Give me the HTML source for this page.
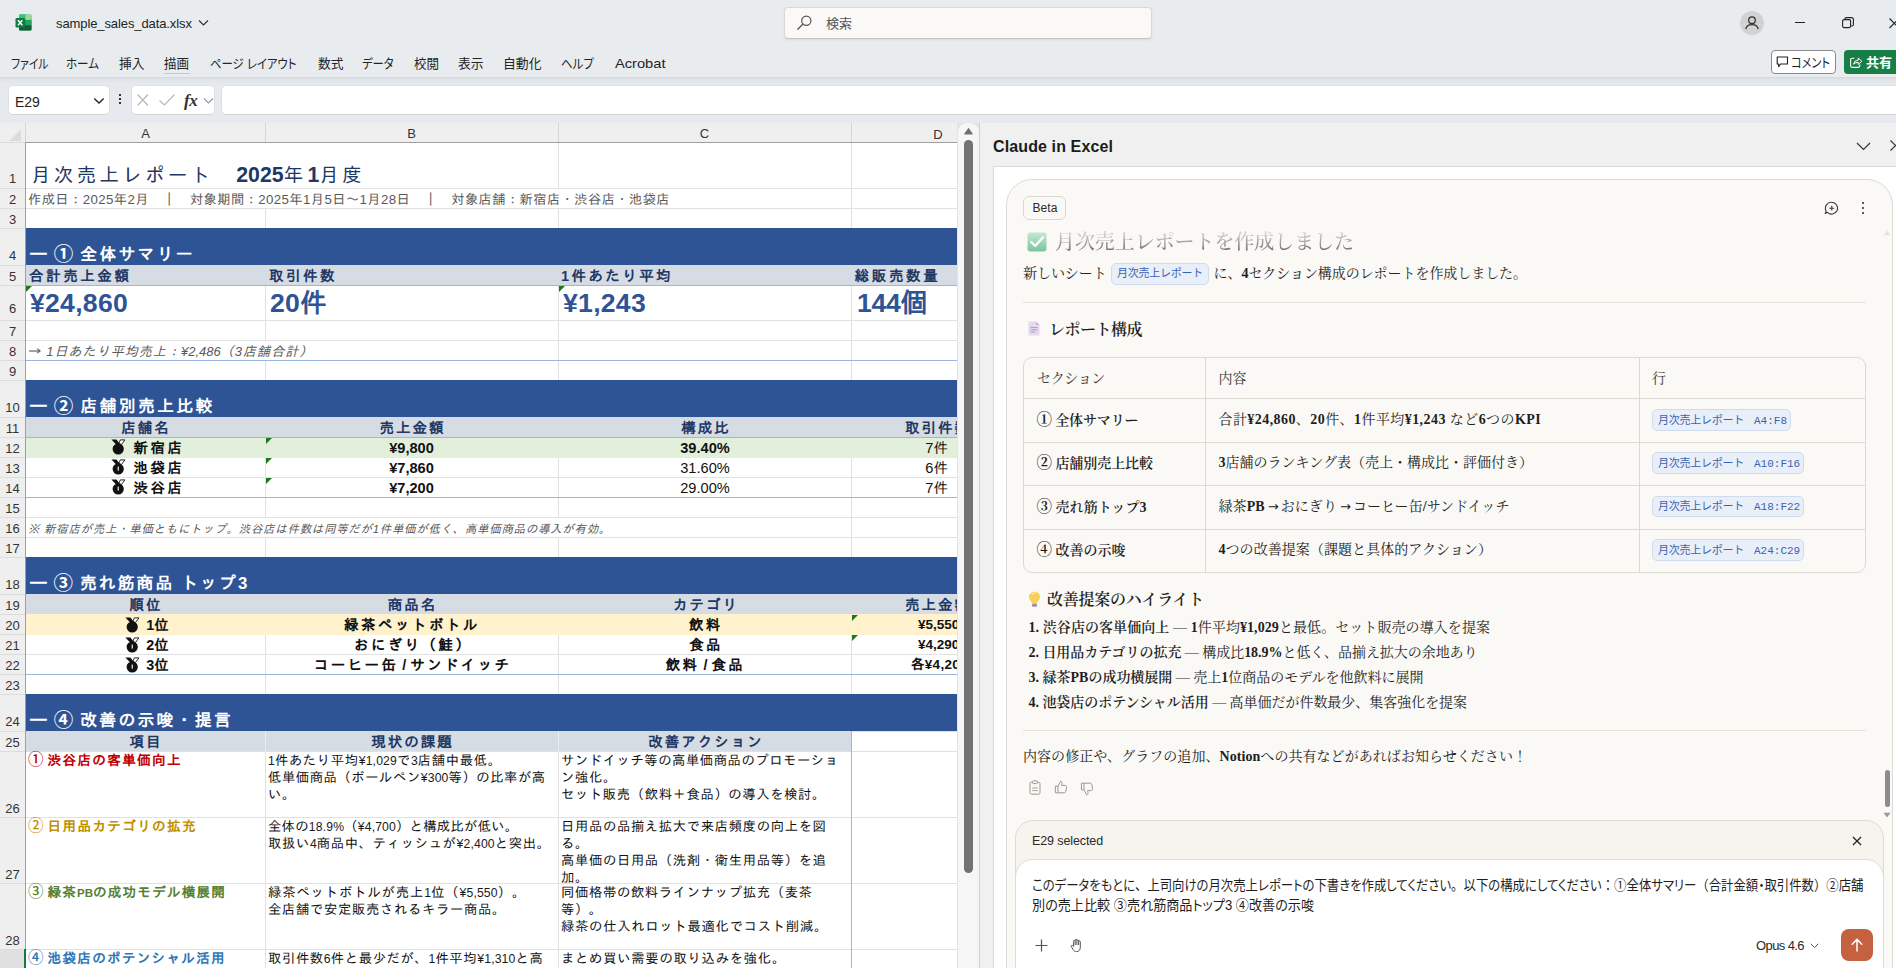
<!DOCTYPE html>
<html lang="ja"><head><meta charset="utf-8"><title>sample_sales_data.xlsx - Excel</title>
<style>
*{box-sizing:border-box}
html,body{margin:0;padding:0}
body{width:1896px;height:968px;overflow:hidden;position:relative;background:#e8ecef;
 font-family:"Liberation Sans","Noto Sans CJK JP",sans-serif;color:#242424;-webkit-font-smoothing:antialiased}
.abs{position:absolute}
.t{position:absolute;white-space:nowrap;line-height:1;transform:translateY(-50%)}
.ui{font-family:"Liberation Sans","Noto Sans CJK JP",sans-serif}
#top{position:absolute;left:0;top:0;width:1896px;height:78px;background:#e8ecef}
#topline{position:absolute;left:0;top:77px;width:1896px;height:7px;background:linear-gradient(#d3d7db 0,#dfe3e7 25%,#e6eaef 100%);z-index:2}
#fbar{position:absolute;left:0;top:79px;width:1896px;height:44px;background:#e6eaef}
.box{position:absolute;background:#fff;border:1px solid #dde1e5;border-bottom-color:#cfd2d6;border-radius:5px}
.menu{font-feature-settings:"palt";position:absolute;top:63px;font-size:13px;color:#242424;white-space:nowrap;line-height:1;transform:translateY(-50%);transform-origin:left center}
.menu i{font-style:normal;display:inline-block;transform-origin:left center}

#sheet{position:absolute;left:0;top:123px;width:980px;height:845px;background:#fff;overflow:hidden}
#colhdr{position:absolute;left:0;top:0;width:958px;height:20px;background:#efefef;border-bottom:1px solid #9f9f9f}
#rowhdr{position:absolute;left:0;top:20px;width:26px;height:830px;background:#efefef;border-right:1px solid #9f9f9f}
.ch{position:absolute;top:0;height:19px;border-right:1px solid #d4d4d4;font-size:13px;color:#333;text-align:center;line-height:22px}
.rn{position:absolute;left:0;width:25px;text-align:center;font-size:13px;color:#333;line-height:1;border-top:1px solid #dcdcdc}
.rn span{position:absolute;left:0;width:25px;bottom:2px;text-align:center}
.cell{position:absolute;border-top:1px solid #e1e1e1;border-left:1px solid #e1e1e1;overflow:visible}
.sh{font-family:"Liberation Sans","IPAGothic","Noto Sans CJK JP",sans-serif}
.sc{font-family:"Liberation Sans","IPAGothic","Noto Sans CJK JP",sans-serif}
.band{position:absolute;left:26px;width:932px;background:#2f5496}
.hdrrow{position:absolute;background:#d6dce4}
.tri{position:absolute;width:0;height:0;border-top:6px solid #1a7a1a;border-right:6px solid transparent}
.bl{position:absolute;height:1px;background:#9bb7e0}
.nn{font-size:12.2px;letter-spacing:0.15px;color:#1a1a1a}
.wrap{position:absolute;white-space:pre;line-height:17px;font-size:13.3px;color:#111;letter-spacing:0.55px}

#panel{position:absolute;left:980px;top:123px;width:917px;height:845px;background:#f0f0f0;overflow:hidden}
#pwhite{position:absolute;left:13px;top:43px;width:910px;height:810px;background:#fff;border:1px solid #d9d9d9}
#card{position:absolute;left:26px;top:56px;width:887px;height:820px;background:#faf9f5;border:1px solid #dcdbd5;border-radius:26px}
.sf{font-family:"Liberation Serif","Noto Serif CJK SC",serif}
.sf b{font-family:"Liberation Serif","Noto Serif CJK SC",serif;font-weight:600}
.sf .l{font-weight:bold}
.cn{font-family:"Liberation Serif","Noto Serif CJK SC",serif;font-weight:700;font-size:15.5px;vertical-align:-0.5px}
.ar{font-family:"DejaVu Sans","Liberation Sans",sans-serif;font-size:13px;margin:0 2px 0 3px;vertical-align:0.5px}
.p{position:absolute;white-space:nowrap;line-height:1;transform:translateY(-50%);font-size:14px;color:#1f1e1d}
.tag{display:inline-block;background:#e9eff8;border:1px solid #cfdcf0;border-radius:5px;color:#3a62b3;font-family:"Liberation Sans","Noto Sans CJK JP",sans-serif;font-size:12px;line-height:1}
.squeeze{font-feature-settings:"palt"}
.fw{font-feature-settings:"palt" 0}
.mono{font-family:"Liberation Mono","DejaVu Sans Mono",monospace}
.hr{position:absolute;left:43px;width:843px;height:1px;background:#e3e1da}
#tbl{position:absolute;left:43px;top:234px;width:843px;height:216px;border:1px solid #dad9d2;border-radius:9px}
.tl{position:absolute;background:#dad9d2}
</style></head>
<body>
<div id="top">
<svg class="abs" style="left:15px;top:14px" width="17" height="17" viewBox="0 0 17 17">
<rect x="4" y="0.5" width="12.5" height="16" rx="1.6" fill="#21a366"/>
<rect x="4" y="0.5" width="6.3" height="5.4" fill="#33c481"/><rect x="10.3" y="0.5" width="6.2" height="5.4" rx="1" fill="#9bdc9b"/>
<rect x="10.3" y="5.9" width="6.2" height="5.3" fill="#21a366"/><rect x="4" y="5.9" width="6.3" height="5.3" fill="#107c41"/>
<rect x="4" y="11.2" width="12.5" height="5.3" rx="1" fill="#185c37"/>
<rect x="0.5" y="4" width="9.5" height="9.5" rx="1.2" fill="#107c41"/>
<path d="M3 6.3 L7.4 11.3 M7.4 6.3 L3 11.3" stroke="#fff" stroke-width="1.5" fill="none"/></svg>
<span class="t ui" style="left:56px;top:23px;font-size:13px;color:#242424;letter-spacing:-0.1px">sample_sales_data.xlsx</span>
<svg class="abs" style="left:198px;top:19px" width="11" height="8" viewBox="0 0 11 8"><path d="M1 1.5 L5.5 6 L10 1.5" stroke="#333" stroke-width="1.2" fill="none"/></svg>
<div class="abs" style="left:784px;top:7px;width:368px;height:32px;background:#faf9f8;border:1px solid #d9d9d9;border-bottom-color:#c4c4c4;border-radius:4px;box-shadow:0 1px 2px rgba(0,0,0,.08)"></div>
<svg class="abs" style="left:796px;top:14px" width="17" height="17" viewBox="0 0 17 17"><circle cx="10.3" cy="6.7" r="4.6" stroke="#555" stroke-width="1.2" fill="none"/><path d="M7 10 L1.8 15.2" stroke="#555" stroke-width="1.3" stroke-linecap="round"/></svg>
<span class="t ui" style="left:826px;top:23px;font-size:13px;color:#555">検索</span>
<svg class="abs" style="left:1740px;top:11px" width="24" height="24" viewBox="0 0 24 24"><circle cx="12" cy="12" r="12" fill="#d2d2d2"/>
<circle cx="12" cy="9.2" r="3.3" stroke="#333" stroke-width="1.3" fill="none"/><path d="M5.8 18.2 C6.3 14.6 8.6 13.6 12 13.6 C15.4 13.6 17.7 14.6 18.2 18.2" stroke="#333" stroke-width="1.3" fill="none"/></svg>
<div class="abs" style="left:1795px;top:22px;width:10px;height:1px;background:#222"></div>
<svg class="abs" style="left:1842px;top:17px" width="12" height="12" viewBox="0 0 12 12"><rect x="0.6" y="2.6" width="8" height="8" rx="1.5" stroke="#222" stroke-width="1.1" fill="none"/><path d="M3 2.4 V1.8 Q3 0.6 4.4 0.6 H9.4 Q11.4 0.6 11.4 2.6 V7.6 Q11.4 9 10.2 9 H9" stroke="#222" stroke-width="1.1" fill="none"/></svg>
<svg class="abs" style="left:1889px;top:18px" width="10" height="11" viewBox="0 0 10 11"><path d="M0.5 0.5 L10 10 M0.5 10 L10 0.5" stroke="#222" stroke-width="1.1"/></svg>
<span class="menu" style="transform:translateY(-50%) scaleX(0.8328);transform-origin:left center;left:11px">ファイル</span>
<span class="menu" style="transform:translateY(-50%) scaleX(0.8870);transform-origin:left center;left:66px">ホーム</span>
<span class="menu" style="transform:translateY(-50%) scaleX(0.9802);transform-origin:left center;left:119px">挿入</span>
<span class="menu" style="transform:translateY(-50%) scaleX(0.9610);transform-origin:left center;left:164px">描画</span>
<span class="menu" style="transform:translateY(-50%) scaleX(0.8751);transform-origin:left center;left:210px">ページ レイアウト</span>
<span class="menu" style="transform:translateY(-50%) scaleX(0.9802);transform-origin:left center;left:317.5px">数式</span>
<span class="menu" style="transform:translateY(-50%) scaleX(0.8667);transform-origin:left center;left:362px">データ</span>
<span class="menu" style="transform:translateY(-50%) scaleX(0.9610);transform-origin:left center;left:413.5px">校閲</span>
<span class="menu" style="transform:translateY(-50%) scaleX(0.9802);transform-origin:left center;left:458px">表示</span>
<span class="menu" style="transform:translateY(-50%) scaleX(0.9868);transform-origin:left center;left:503px">自動化</span>
<span class="menu" style="transform:translateY(-50%) scaleX(0.8844);transform-origin:left center;left:560.5px">ヘルプ</span>
<span class="menu" style="transform:translateY(-50%) scaleX(1.1269);transform-origin:left center;left:614.5px">Acrobat</span>
<div class="abs" style="left:164px;top:73px;width:26px;height:1px;background:#c8c8c8"></div>
<div class="abs" style="left:1771px;top:50px;width:65px;height:24px;background:#fff;border:1px solid #8a8a8a;border-radius:4px"></div>
<svg class="abs" style="left:1776px;top:56px" width="13" height="12" viewBox="0 0 13 12"><path d="M1.2 1 H11.5 V8 H4.6 L2.6 10.6 V8 H1.2 Z" stroke="#222" stroke-width="1.1" fill="none" stroke-linejoin="round"/></svg>
<span class="menu" style="transform:translateY(-50%) scaleX(0.8613);transform-origin:left center;left:1791px;top:62px;">コメント</span>
<div class="abs" style="left:1844px;top:50px;width:60px;height:24px;background:#177e45;border-radius:4px"></div>
<svg class="abs" style="left:1849px;top:55px" width="14" height="14" viewBox="0 0 14 14"><path d="M5.5 3.2 H3.2 Q1.6 3.2 1.6 4.8 V10.8 Q1.6 12.4 3.2 12.4 H9.2 Q10.8 12.4 10.8 10.8 V9.6" stroke="#fff" stroke-width="1.1" fill="none"/><path d="M4.6 9.2 Q5 5.2 9.2 5.2 V3 L12.8 6.3 L9.2 9.4 V7.4 Q6.4 7.2 4.6 9.2 Z" stroke="#fff" stroke-width="1" fill="none" stroke-linejoin="round"/></svg>
<span class="menu" style="left:1866px;top:62px;color:#fff;font-size:13px;font-weight:bold">共有</span>
</div><div id="topline"></div>
<div id="fbar">
<div class="box" style="left:8px;top:6px;width:102px;height:30px"></div>
<span class="t ui" style="left:15px;top:23px;font-size:14px;color:#242424">E29</span>
<svg class="abs" style="left:93px;top:18px" width="12" height="8" viewBox="0 0 12 8"><path d="M1.3 1.5 L6 6 L10.7 1.5" stroke="#222" stroke-width="1.3" fill="none"/></svg>
<div class="abs" style="left:119px;top:15px;width:2px;height:2px;background:#333;box-shadow:0 4px 0 #333,0 8px 0 #333"></div>
<div class="box" style="left:131px;top:6px;width:84px;height:30px"></div>
<svg class="abs" style="left:136px;top:14px" width="14" height="14" viewBox="0 0 14 14"><path d="M1.5 1.5 L12 12.5 M12 1.5 L1.5 12.5" stroke="#b8b8b8" stroke-width="1.2"/></svg>
<svg class="abs" style="left:158px;top:14px" width="18" height="14" viewBox="0 0 18 14"><path d="M1.5 7.5 L6.5 12 L16.5 1.5" stroke="#b8b8b8" stroke-width="1.2" fill="none"/></svg>
<span class="t" style="left:184px;top:21px;font-family:'Liberation Serif',serif;font-style:italic;font-weight:bold;font-size:17px;color:#333;letter-spacing:-0.5px">fx</span>
<svg class="abs" style="left:203px;top:18px" width="11" height="8" viewBox="0 0 11 8"><path d="M1 1.5 L5.5 6 L10 1.5" stroke="#999" stroke-width="1.1" fill="none"/></svg>
<div class="box" style="left:221px;top:6px;width:1690px;height:30px"></div>
</div>
<div id="sheet">
<div class="abs" style="left:26px;top:19px;width:932px;height:1px;background:#e1e1e1"></div>
<div class="abs" style="left:26px;top:65px;width:932px;height:1px;background:#e1e1e1"></div>
<div class="abs" style="left:26px;top:85px;width:932px;height:1px;background:#e1e1e1"></div>
<div class="abs" style="left:26px;top:105px;width:932px;height:1px;background:#e1e1e1"></div>
<div class="abs" style="left:26px;top:142px;width:932px;height:1px;background:#e1e1e1"></div>
<div class="abs" style="left:26px;top:162px;width:932px;height:1px;background:#e1e1e1"></div>
<div class="abs" style="left:26px;top:197px;width:932px;height:1px;background:#e1e1e1"></div>
<div class="abs" style="left:26px;top:217px;width:932px;height:1px;background:#e1e1e1"></div>
<div class="abs" style="left:26px;top:237px;width:932px;height:1px;background:#e1e1e1"></div>
<div class="abs" style="left:26px;top:257px;width:932px;height:1px;background:#e1e1e1"></div>
<div class="abs" style="left:26px;top:294px;width:932px;height:1px;background:#e1e1e1"></div>
<div class="abs" style="left:26px;top:314px;width:932px;height:1px;background:#e1e1e1"></div>
<div class="abs" style="left:26px;top:334px;width:932px;height:1px;background:#e1e1e1"></div>
<div class="abs" style="left:26px;top:354px;width:932px;height:1px;background:#e1e1e1"></div>
<div class="abs" style="left:26px;top:374px;width:932px;height:1px;background:#e1e1e1"></div>
<div class="abs" style="left:26px;top:394px;width:932px;height:1px;background:#e1e1e1"></div>
<div class="abs" style="left:26px;top:414px;width:932px;height:1px;background:#e1e1e1"></div>
<div class="abs" style="left:26px;top:434px;width:932px;height:1px;background:#e1e1e1"></div>
<div class="abs" style="left:26px;top:471px;width:932px;height:1px;background:#e1e1e1"></div>
<div class="abs" style="left:26px;top:491px;width:932px;height:1px;background:#e1e1e1"></div>
<div class="abs" style="left:26px;top:511px;width:932px;height:1px;background:#e1e1e1"></div>
<div class="abs" style="left:26px;top:531px;width:932px;height:1px;background:#e1e1e1"></div>
<div class="abs" style="left:26px;top:551px;width:932px;height:1px;background:#e1e1e1"></div>
<div class="abs" style="left:26px;top:571px;width:932px;height:1px;background:#e1e1e1"></div>
<div class="abs" style="left:26px;top:608px;width:932px;height:1px;background:#e1e1e1"></div>
<div class="abs" style="left:26px;top:628px;width:932px;height:1px;background:#e1e1e1"></div>
<div class="abs" style="left:26px;top:694px;width:932px;height:1px;background:#e1e1e1"></div>
<div class="abs" style="left:26px;top:760px;width:932px;height:1px;background:#e1e1e1"></div>
<div class="abs" style="left:26px;top:826px;width:932px;height:1px;background:#e1e1e1"></div>
<div class="abs" style="left:265px;top:20px;width:1px;height:830px;background:#e1e1e1"></div>
<div class="abs" style="left:558px;top:20px;width:1px;height:830px;background:#e1e1e1"></div>
<div class="abs" style="left:851px;top:20px;width:1px;height:830px;background:#e1e1e1"></div>
<div class="abs" style="left:27px;top:20px;width:531px;height:45px;background:#fff"></div>
<div class="abs" style="left:27px;top:66px;width:824px;height:19px;background:#fff"></div>
<div class="abs" style="left:27px;top:218px;width:531px;height:19px;background:#fff"></div>
<div class="abs" style="left:27px;top:395px;width:824px;height:19px;background:#fff"></div>
<div class="band" style="top:105px;height:37px"></div>
<div class="band" style="top:257px;height:37px"></div>
<div class="band" style="top:434px;height:37px"></div>
<div class="band" style="top:571px;height:37px"></div>
<div class="hdrrow" style="left:26px;width:932px;top:142px;height:20px"></div>
<div class="hdrrow" style="left:26px;width:932px;top:294px;height:20px"></div>
<div class="hdrrow" style="left:26px;width:932px;top:471px;height:20px"></div>
<div class="hdrrow" style="left:26px;width:826px;top:608px;height:20px"></div>
<div class="abs" style="left:265px;top:608px;width:1px;height:20px;background:#e9edf3"></div><div class="abs" style="left:558px;top:608px;width:1px;height:20px;background:#e9edf3"></div>
<div class="abs" style="left:26px;width:932px;top:315px;height:20px;background:#e2efda"></div>
<div class="abs" style="left:26px;width:932px;top:491px;height:21px;background:#fff2cc"></div>
<div class="bl" style="left:26px;width:932px;top:162px"></div>
<div class="bl" style="left:26px;width:932px;top:237px"></div>
<div class="bl" style="left:26px;width:932px;top:314px"></div>
<div class="bl" style="left:26px;width:932px;top:374px"></div>
<div class="bl" style="left:26px;width:932px;top:551px"></div>
<div class="abs" style="left:851px;top:608px;width:1px;height:240px;background:#9bb7e0"></div>
<div class="tri" style="left:26px;top:163px"></div>
<div class="tri" style="left:559px;top:163px"></div>
<div class="tri" style="left:266px;top:315px"></div>
<div class="tri" style="left:266px;top:335px"></div>
<div class="tri" style="left:266px;top:355px"></div>
<div class="tri" style="left:852px;top:492px"></div>
<div class="tri" style="left:852px;top:512px"></div>
<span class="t sh" style="left:31px;top:52.5px;transform:translateY(-50%);font-size:19.6px;color:#1f3864;letter-spacing:3.213px">月次売上レポート　<b style="font-size:21.3px;letter-spacing:0;-webkit-text-stroke:0">2025</b>年<b style="font-size:21.3px;letter-spacing:0;-webkit-text-stroke:0;margin-left:1px">1</b>月度</span>
<span class="t sh" style="left:28px;top:77px;transform:translateY(-50%);font-size:13.3px;color:#595959;letter-spacing:0.375px">作成日：2025年2月　｜　対象期間：2025年1月5日～1月28日　｜　対象店舗：新宿店・渋谷店・池袋店</span>
<span class="t sh" style="left:30px;top:131.7px;transform:translateY(-50%);font-size:16.8px;font-weight:bold;color:#fff;letter-spacing:2.328px"><span style="font-weight:normal;letter-spacing:0">━</span> <span style="font-family:'Liberation Sans','Noto Sans CJK JP',sans-serif;font-weight:700;font-size:19.5px;vertical-align:-1.5px;letter-spacing:0">①</span> 全体サマリー</span>
<span class="t sh" style="left:30px;top:283.7px;transform:translateY(-50%);font-size:16.8px;font-weight:bold;color:#fff;letter-spacing:2.409px"><span style="font-weight:normal;letter-spacing:0">━</span> <span style="font-family:'Liberation Sans','Noto Sans CJK JP',sans-serif;font-weight:700;font-size:19.5px;vertical-align:-1.5px;letter-spacing:0">②</span> 店舗別売上比較</span>
<span class="t sh" style="left:30px;top:460.70000000000005px;transform:translateY(-50%);font-size:16.8px;font-weight:bold;color:#fff;letter-spacing:2.123px"><span style="font-weight:normal;letter-spacing:0">━</span> <span style="font-family:'Liberation Sans','Noto Sans CJK JP',sans-serif;font-weight:700;font-size:19.5px;vertical-align:-1.5px;letter-spacing:0">③</span> 売れ筋商品 トップ3</span>
<span class="t sh" style="left:30px;top:597.7px;transform:translateY(-50%);font-size:16.8px;font-weight:bold;color:#fff;letter-spacing:2.309px"><span style="font-weight:normal;letter-spacing:0">━</span> <span style="font-family:'Liberation Sans','Noto Sans CJK JP',sans-serif;font-weight:700;font-size:19.5px;vertical-align:-1.5px;letter-spacing:0">④</span> 改善の示唆・提言</span>
<span class="t sh" style="left:29px;top:153px;transform:translateY(-50%);font-size:14.5px;font-weight:bold;color:#1f3864;letter-spacing:2.583px">合計売上金額</span>
<span class="t sh" style="left:269px;top:153px;transform:translateY(-50%);font-size:14.5px;font-weight:bold;color:#1f3864;letter-spacing:2.500px">取引件数</span>
<span class="t sh" style="left:561px;top:153px;transform:translateY(-50%);font-size:14.5px;font-weight:bold;color:#1f3864;letter-spacing:2.417px">1件あたり平均</span>
<span class="t sh" style="left:854.5px;top:153px;transform:translateY(-50%);font-size:14.5px;font-weight:bold;color:#1f3864;letter-spacing:2.700px">総販売数量</span>
<span class="t sh" style="left:30px;top:180px;transform:translateY(-50%);font-size:26.6px;font-weight:bold;color:#2f5496;letter-spacing:0.266px">¥24,860</span>
<span class="t sh" style="left:270px;top:180px;transform:translateY(-50%);font-size:26.6px;font-weight:bold;color:#2f5496;letter-spacing:0.271px">20件</span>
<span class="t sh" style="left:563px;top:180px;transform:translateY(-50%);font-size:26.6px;font-weight:bold;color:#2f5496;letter-spacing:0.276px">¥1,243</span>
<span class="t sh" style="left:857px;top:180px;transform:translateY(-50%);font-size:26.6px;font-weight:bold;color:#2f5496;letter-spacing:-0.242px">144個</span>
<span class="t sh" style="left:28px;top:229px;transform:translateY(-50%);font-size:13px;font-style:italic;color:#595959;letter-spacing:1.054px"><span style="font-family:IPAGothic,'Liberation Sans',sans-serif;font-size:13.5px;letter-spacing:0;font-style:normal">→</span> 1日あたり平均売上：<span style="letter-spacing:0">¥2,486</span>（3店舗合計）</span>
<span class="t sh" style="left:146.0px;top:304.5px;transform:translate(-50%,-50%);font-size:14.5px;font-weight:bold;color:#1f3864;letter-spacing:2px">店舗名</span>
<span class="t sh" style="left:412.5px;top:304.5px;transform:translate(-50%,-50%);font-size:14.5px;font-weight:bold;color:#1f3864;letter-spacing:2px">売上金額</span>
<span class="t sh" style="left:706.0px;top:304.5px;transform:translate(-50%,-50%);font-size:14.5px;font-weight:bold;color:#1f3864;letter-spacing:2px">構成比</span>
<span class="t sh" style="left:905px;top:304.5px;transform:translateY(-50%);font-size:14.5px;font-weight:bold;color:#1f3864;letter-spacing:2px">取引件数</span>
<svg class="abs" style="left:110.5px;top:316.0px" width="15" height="16" viewBox="0 0 15 16"><path d="M0.4 0.6 L5.4 0.6 L8.6 4.6 L5.6 6 Z" fill="#111"/><path d="M9.4 0.9 L13.9 0.9 L10.4 5.6 L7.9 4.2 Z" fill="#fff" stroke="#111" stroke-width="0.9" stroke-linejoin="round"/><circle cx="7.2" cy="10" r="5.6" fill="#111"/></svg>
<span class="t sh" style="left:133.5px;top:324.5px;transform:translateY(-50%);font-size:14.4px;font-weight:bold;color:#111;letter-spacing:2.609px">新宿店</span>
<span class="t sh" style="left:411.5px;top:324.5px;transform:translate(-50%,-50%);font-size:14.6px;font-weight:bold;color:#111">¥9,800</span>
<span class="t sh" style="left:705px;top:324.5px;transform:translate(-50%,-50%);font-size:14.6px;color:#111;font-weight:bold">39.40%</span>
<span class="t sh" style="left:948px;top:324.5px;transform:translate(-100%,-50%);font-size:14.6px;color:#111;letter-spacing:0px">7件</span>
<svg class="abs" style="left:110.5px;top:336.0px" width="15" height="16" viewBox="0 0 15 16"><path d="M0.4 0.6 L5.4 0.6 L8.6 4.6 L5.6 6 Z" fill="#111"/><path d="M9.4 0.9 L13.9 0.9 L10.4 5.6 L7.9 4.2 Z" fill="#fff" stroke="#111" stroke-width="0.9" stroke-linejoin="round"/><circle cx="7.2" cy="10" r="5.6" fill="#111"/><rect x="6.6" y="7.6" width="1.4" height="4" fill="#fff" opacity=".8"/></svg>
<span class="t sh" style="left:133.5px;top:344.5px;transform:translateY(-50%);font-size:14.4px;font-weight:bold;color:#111;letter-spacing:2.609px">池袋店</span>
<span class="t sh" style="left:411.5px;top:344.5px;transform:translate(-50%,-50%);font-size:14.6px;font-weight:bold;color:#111">¥7,860</span>
<span class="t sh" style="left:705px;top:344.5px;transform:translate(-50%,-50%);font-size:14.6px;color:#111">31.60%</span>
<span class="t sh" style="left:948px;top:344.5px;transform:translate(-100%,-50%);font-size:14.6px;color:#111;letter-spacing:0px">6件</span>
<svg class="abs" style="left:110.5px;top:356.0px" width="15" height="16" viewBox="0 0 15 16"><path d="M0.4 0.6 L5.4 0.6 L8.6 4.6 L5.6 6 Z" fill="#111"/><path d="M9.4 0.9 L13.9 0.9 L10.4 5.6 L7.9 4.2 Z" fill="#fff" stroke="#111" stroke-width="0.9" stroke-linejoin="round"/><circle cx="7.2" cy="10" r="5.6" fill="#111"/><rect x="6.6" y="7.6" width="1.4" height="4" fill="#fff" opacity=".8"/></svg>
<span class="t sh" style="left:133.5px;top:364.5px;transform:translateY(-50%);font-size:14.4px;font-weight:bold;color:#111;letter-spacing:2.609px">渋谷店</span>
<span class="t sh" style="left:411.5px;top:364.5px;transform:translate(-50%,-50%);font-size:14.6px;font-weight:bold;color:#111">¥7,200</span>
<span class="t sh" style="left:705px;top:364.5px;transform:translate(-50%,-50%);font-size:14.6px;color:#111">29.00%</span>
<span class="t sh" style="left:948px;top:364.5px;transform:translate(-100%,-50%);font-size:14.6px;color:#111;letter-spacing:0px">7件</span>
<span class="t sh" style="left:28px;top:407px;transform:translateY(-50%);font-size:11.5px;font-style:italic;color:#595959;letter-spacing:0.671px">※ 新宿店が売上・単価ともにトップ。渋谷店は件数は同等だが1件単価が低く、高単価商品の導入が有効。</span>
<span class="t sh" style="left:146.0px;top:481.5px;transform:translate(-50%,-50%);font-size:14.5px;font-weight:bold;color:#1f3864;letter-spacing:2px">順位</span>
<span class="t sh" style="left:412.5px;top:481.5px;transform:translate(-50%,-50%);font-size:14.5px;font-weight:bold;color:#1f3864;letter-spacing:2px">商品名</span>
<span class="t sh" style="left:706.0px;top:481.5px;transform:translate(-50%,-50%);font-size:14.5px;font-weight:bold;color:#1f3864;letter-spacing:2px">カテゴリ</span>
<span class="t sh" style="left:905px;top:481.5px;transform:translateY(-50%);font-size:14.5px;font-weight:bold;color:#1f3864;letter-spacing:2px">売上金額</span>
<svg class="abs" style="left:125px;top:493.5px" width="15" height="16" viewBox="0 0 15 16"><path d="M0.4 0.6 L5.4 0.6 L8.6 4.6 L5.6 6 Z" fill="#111"/><path d="M9.4 0.9 L13.9 0.9 L10.4 5.6 L7.9 4.2 Z" fill="#fff" stroke="#111" stroke-width="0.9" stroke-linejoin="round"/><circle cx="7.2" cy="10" r="5.6" fill="#111"/></svg>
<span class="t sh" style="left:146.3px;top:501.5px;transform:translateY(-50%);font-size:14.4px;font-weight:bold;color:#111;letter-spacing:2.447px"><span style="letter-spacing:0">1</span>位</span>
<span class="t sh" style="left:344px;top:501.5px;transform:translateY(-50%);font-size:14.4px;font-weight:bold;color:#111;letter-spacing:2.609px">緑茶ペットボトル</span>
<span class="t sh" style="left:689px;top:501.5px;transform:translateY(-50%);font-size:14.4px;font-weight:bold;color:#111;letter-spacing:2.359px">飲料</span>
<svg class="abs" style="left:125px;top:513.5px" width="15" height="16" viewBox="0 0 15 16"><path d="M0.4 0.6 L5.4 0.6 L8.6 4.6 L5.6 6 Z" fill="#111"/><path d="M9.4 0.9 L13.9 0.9 L10.4 5.6 L7.9 4.2 Z" fill="#fff" stroke="#111" stroke-width="0.9" stroke-linejoin="round"/><circle cx="7.2" cy="10" r="5.6" fill="#111"/><rect x="6.6" y="7.6" width="1.4" height="4" fill="#fff" opacity=".8"/></svg>
<span class="t sh" style="left:146.3px;top:521.5px;transform:translateY(-50%);font-size:14.4px;font-weight:bold;color:#111;letter-spacing:2.447px"><span style="letter-spacing:0">2</span>位</span>
<span class="t sh" style="left:354px;top:521.5px;transform:translateY(-50%);font-size:14.4px;font-weight:bold;color:#111;letter-spacing:2.509px">おにぎり（鮭）</span>
<span class="t sh" style="left:689.3px;top:521.5px;transform:translateY(-50%);font-size:14.4px;font-weight:bold;color:#111;letter-spacing:2.359px">食品</span>
<svg class="abs" style="left:125px;top:533.5px" width="15" height="16" viewBox="0 0 15 16"><path d="M0.4 0.6 L5.4 0.6 L8.6 4.6 L5.6 6 Z" fill="#111"/><path d="M9.4 0.9 L13.9 0.9 L10.4 5.6 L7.9 4.2 Z" fill="#fff" stroke="#111" stroke-width="0.9" stroke-linejoin="round"/><circle cx="7.2" cy="10" r="5.6" fill="#111"/><rect x="6.6" y="7.6" width="1.4" height="4" fill="#fff" opacity=".8"/></svg>
<span class="t sh" style="left:146.3px;top:541.5px;transform:translateY(-50%);font-size:14.4px;font-weight:bold;color:#111;letter-spacing:2.447px"><span style="letter-spacing:0">3</span>位</span>
<span class="t sh" style="left:314px;top:541.5px;transform:translateY(-50%);font-size:14.4px;font-weight:bold;color:#111;letter-spacing:2.465px">コーヒー缶<span style="letter-spacing:0"> / </span>サンドイッチ</span>
<span class="t sh" style="left:665.8px;top:541.5px;transform:translateY(-50%);font-size:14.4px;font-weight:bold;color:#111;letter-spacing:2.434px">飲料<span style="letter-spacing:0"> / </span>食品</span>
<span class="t sh" style="left:918px;top:501.5px;transform:translateY(-50%);font-size:13.5px;font-weight:bold;color:#111">¥5,550</span>
<span class="t sh" style="left:918px;top:521.5px;transform:translateY(-50%);font-size:13.5px;font-weight:bold;color:#111">¥4,290</span>
<span class="t sh" style="left:911px;top:541.5px;transform:translateY(-50%);font-size:13.5px;font-weight:bold;color:#111;letter-spacing:0.3px">各¥4,200</span>
<span class="t sh" style="left:146.0px;top:618.5px;transform:translate(-50%,-50%);font-size:14.5px;font-weight:bold;color:#1f3864;letter-spacing:2px">項目</span>
<span class="t sh" style="left:412.5px;top:618.5px;transform:translate(-50%,-50%);font-size:14.5px;font-weight:bold;color:#1f3864;letter-spacing:2px">現状の課題</span>
<span class="t sh" style="left:706.0px;top:618.5px;transform:translate(-50%,-50%);font-size:14.5px;font-weight:bold;color:#1f3864;letter-spacing:2px">改善アクション</span>
<span class="t sh" style="left:28px;top:637px;transform:translateY(-50%);font-size:13.6px;font-weight:bold;letter-spacing:1.324px;color:#c00000"><span style="font-family:'Liberation Sans','Noto Sans CJK JP',sans-serif;font-weight:500;font-size:15.5px;letter-spacing:0;vertical-align:-0.5px;margin-right:-1px">①</span> 渋谷店の客単価向上</span>
<span class="t sh" style="left:28px;top:703px;transform:translateY(-50%);font-size:13.6px;font-weight:bold;letter-spacing:1.330px;color:#bf8f00"><span style="font-family:'Liberation Sans','Noto Sans CJK JP',sans-serif;font-weight:500;font-size:15.5px;letter-spacing:0;vertical-align:-0.5px;margin-right:-1px">②</span> 日用品カテゴリの拡充</span>
<span class="t sh" style="left:28px;top:768.5px;transform:translateY(-50%);font-size:13.6px;font-weight:bold;letter-spacing:1.184px;color:#548235"><span style="font-family:'Liberation Sans','Noto Sans CJK JP',sans-serif;font-weight:500;font-size:15.5px;letter-spacing:0;vertical-align:-0.5px;margin-right:-1px">③</span> 緑茶<span style="font-size:11.5px;letter-spacing:0">PB</span>の成功モデル横展開</span>
<span class="t sh" style="left:28px;top:834.5px;transform:translateY(-50%);font-size:13.6px;font-weight:bold;letter-spacing:1.269px;color:#2e75b6"><span style="font-family:'Liberation Sans','Noto Sans CJK JP',sans-serif;font-weight:500;font-size:15.5px;letter-spacing:0;vertical-align:-0.5px;margin-right:-1px">④</span> 池袋店のポテンシャル活用</span>
<span class="t sc" style="left:268px;top:638px;font-size:13.33px;color:#111;letter-spacing:0.640px"><span class="nn">1</span>件あたり平均<span class="nn">¥1,029</span>で<span class="nn">3</span>店舗中最低。</span>
<span class="t sc" style="left:268px;top:655px;font-size:13.33px;color:#111;letter-spacing:0.562px">低単価商品（ボールペン<span class="nn">¥300</span>等）の比率が高</span>
<span class="t sc" style="left:268px;top:672px;font-size:13.33px;color:#111;letter-spacing:0.6px">い。</span>
<span class="t sc" style="left:561px;top:638px;font-size:13.33px;color:#111;letter-spacing:0.552px">サンドイッチ等の高単価商品のプロモーショ</span>
<span class="t sc" style="left:561px;top:655px;font-size:13.33px;color:#111;letter-spacing:0.670px">ン強化。</span>
<span class="t sc" style="left:561px;top:672px;font-size:13.33px;color:#111;letter-spacing:0.619px">セット販売（飲料＋食品）の導入を検討。</span>
<span class="t sc" style="left:268px;top:704px;font-size:13.33px;color:#111;letter-spacing:0.284px">全体の<span class="nn">18.9%</span>（<span class="nn">¥4,700</span>）と構成比が低い。</span>
<span class="t sc" style="left:268px;top:721px;font-size:13.33px;color:#111;letter-spacing:0.645px">取扱い<span class="nn">4</span>商品中、ティッシュが<span class="nn">¥2,400</span>と突出。</span>
<span class="t sc" style="left:561px;top:704px;font-size:13.33px;color:#111;letter-spacing:0.650px">日用品の品揃え拡大で来店頻度の向上を図</span>
<span class="t sc" style="left:561px;top:721px;font-size:13.33px;color:#111;letter-spacing:0.6px">る。</span>
<span class="t sc" style="left:561px;top:738px;font-size:13.33px;color:#111;letter-spacing:0.650px">高単価の日用品（洗剤・衛生用品等）を追</span>
<span class="t sc" style="left:561px;top:755px;font-size:13.33px;color:#111;letter-spacing:0.6px">加。</span>
<span class="t sc" style="left:268px;top:769.5px;font-size:13.33px;color:#111;letter-spacing:0.870px">緑茶ペットボトルが売上<span class="nn">1</span>位（<span class="nn">¥5,550</span>）。</span>
<span class="t sc" style="left:268px;top:786.5px;font-size:13.33px;color:#111;letter-spacing:0.672px">全店舗で安定販売されるキラー商品。</span>
<span class="t sc" style="left:561px;top:769.5px;font-size:13.33px;color:#111;letter-spacing:0.649px">同価格帯の飲料ラインナップ拡充（麦茶</span>
<span class="t sc" style="left:561px;top:786.5px;font-size:13.33px;color:#111;letter-spacing:0.6px">等）。</span>
<span class="t sc" style="left:561px;top:803.5px;font-size:13.33px;color:#111;letter-spacing:0.724px">緑茶の仕入れロット最適化でコスト削減。</span>
<span class="t sc" style="left:268px;top:835.5px;font-size:13.33px;color:#111;letter-spacing:0.628px">取引件数<span class="nn">6</span>件と最少だが、<span class="nn">1</span>件平均<span class="nn">¥1,310</span>と高</span>
<span class="t sc" style="left:561px;top:835.5px;font-size:13.33px;color:#111;letter-spacing:0.734px">まとめ買い需要の取り込みを強化。</span>
<div id="colhdr"></div><div id="rowhdr"></div>
<svg class="abs" style="left:8px;top:5px" width="14" height="14" viewBox="0 0 14 14"><path d="M13 1 V13 H1 Z" fill="#dcdcdc"/></svg>
<div class="ch" style="left:26px;width:240px">A</div>
<div class="ch" style="left:265px;width:294px">B</div>
<div class="ch" style="left:558px;width:294px">C</div>
<span class="t ui" style="left:938px;top:11px;font-size:13px;color:#333;transform:translate(-50%,-50%)">D</span>
<div class="abs" style="left:25px;top:0;width:1px;height:19px;background:#d4d4d4"></div>
<div class="rn" style="top:19px;height:46px"><span style="bottom:3.5px">1</span></div>
<div class="rn" style="top:65px;height:20px"><span style="bottom:2px">2</span></div>
<div class="rn" style="top:85px;height:20px"><span style="bottom:2px">3</span></div>
<div class="rn" style="top:105px;height:37px"><span style="bottom:3.5px">4</span></div>
<div class="rn" style="top:142px;height:20px"><span style="bottom:2px">5</span></div>
<div class="rn" style="top:162px;height:35px"><span style="bottom:5px">6</span></div>
<div class="rn" style="top:197px;height:20px"><span style="bottom:2px">7</span></div>
<div class="rn" style="top:217px;height:20px"><span style="bottom:2px">8</span></div>
<div class="rn" style="top:237px;height:20px"><span style="bottom:2px">9</span></div>
<div class="rn" style="top:257px;height:37px"><span style="bottom:3.5px">10</span></div>
<div class="rn" style="top:294px;height:20px"><span style="bottom:2px">11</span></div>
<div class="rn" style="top:314px;height:20px"><span style="bottom:2px">12</span></div>
<div class="rn" style="top:334px;height:20px"><span style="bottom:2px">13</span></div>
<div class="rn" style="top:354px;height:20px"><span style="bottom:2px">14</span></div>
<div class="rn" style="top:374px;height:20px"><span style="bottom:2px">15</span></div>
<div class="rn" style="top:394px;height:20px"><span style="bottom:2px">16</span></div>
<div class="rn" style="top:414px;height:20px"><span style="bottom:2px">17</span></div>
<div class="rn" style="top:434px;height:37px"><span style="bottom:3.5px">18</span></div>
<div class="rn" style="top:471px;height:20px"><span style="bottom:2px">19</span></div>
<div class="rn" style="top:491px;height:20px"><span style="bottom:2px">20</span></div>
<div class="rn" style="top:511px;height:20px"><span style="bottom:2px">21</span></div>
<div class="rn" style="top:531px;height:20px"><span style="bottom:2px">22</span></div>
<div class="rn" style="top:551px;height:20px"><span style="bottom:2px">23</span></div>
<div class="rn" style="top:571px;height:37px"><span style="bottom:3.5px">24</span></div>
<div class="rn" style="top:608px;height:20px"><span style="bottom:2px">25</span></div>
<div class="rn" style="top:628px;height:66px"><span style="bottom:2px">26</span></div>
<div class="rn" style="top:694px;height:66px"><span style="bottom:2px">27</span></div>
<div class="rn" style="top:760px;height:66px"><span style="bottom:2px">28</span></div>
<div class="abs" style="left:0;top:826px;width:25px;height:30px;background:#e0e0e0;border-top:1px solid #dcdcdc"></div><div class="abs" style="left:24px;top:826px;width:2px;height:30px;background:#107c41"></div>
<div class="abs" style="left:957px;top:0;width:23px;height:845px;background:#e3e3e3"></div>
<div class="abs" style="left:958px;top:0;width:21px;height:860px;background:#f6f6f6;border-radius:9px 9px 0 0"></div>
<svg class="abs" style="left:964px;top:4px" width="9" height="8" viewBox="0 0 9 8"><path d="M4.5 0.8 L8.8 6.8 Q8.8 7.4 8.2 7.4 H0.8 Q0.2 7.4 0.2 6.8 Z" fill="#6f6f6f"/></svg>
<div class="abs" style="left:964px;top:17px;width:9px;height:733px;background:#727272;border-radius:4.5px"></div>
<div class="abs" style="left:979px;top:0;width:1px;height:845px;background:#cfcfcf"></div>
</div>
<div id="panel">
<span class="p ui" style="letter-spacing:0.116px;left:13px;top:24px;font-size:16px;font-weight:bold;color:#1b1b1b">Claude in Excel</span>
<svg class="abs" style="left:876px;top:19px" width="15" height="9" viewBox="0 0 15 9"><path d="M1 1 L7.5 7.5 L14 1" stroke="#333" stroke-width="1.2" fill="none"/></svg>
<svg class="abs" style="left:910px;top:17px" width="11" height="11" viewBox="0 0 11 11"><path d="M0.5 0.5 L10.5 10.5 M0.5 10.5 L10.5 0.5" stroke="#333" stroke-width="1.2"/></svg>
<div id="pwhite"></div><div id="card"></div>
<div class="abs" style="left:43px;top:73px;width:43px;height:24px;border:1px solid #d8d7d0;border-radius:6px;background:#faf9f5"></div>
<span class="p ui" style="letter-spacing:0.078px;left:52.5px;top:85px;font-size:12px;color:#2b2a28">Beta</span>
<svg class="abs" style="left:844px;top:78px" width="15" height="15" viewBox="0 0 15 15"><path d="M7.8 1.3 A5.9 5.9 0 1 1 3.4 11.3 L1.2 12.4 L2.1 9.9 A5.9 5.9 0 0 1 7.8 1.3 Z" stroke="#3a3936" stroke-width="1.1" fill="none" stroke-linejoin="round"/><path d="M7.8 4.8 V9.6 M5.4 7.2 H10.2" stroke="#3a3936" stroke-width="1.1"/></svg>
<div class="abs" style="left:882px;top:79px;width:2px;height:2px;border-radius:1px;background:#222;box-shadow:0 5px 0 #222,0 10px 0 #222"></div>
<svg class="abs" style="left:47px;top:109px;opacity:.8" width="20" height="20" viewBox="0 0 19 19"><defs><linearGradient id="gg" x1="0" y1="0" x2="0" y2="1"><stop offset="0" stop-color="#b9e6c9"/><stop offset="1" stop-color="#58b987"/></linearGradient></defs><rect x="0.5" y="0.5" width="18" height="18" rx="2.5" fill="url(#gg)"/><path d="M4 9.5 L7.8 13.3 L15.2 5" stroke="#fff" stroke-width="2.3" fill="none" stroke-linecap="round" stroke-linejoin="round"/></svg>
<span class="p sf" style="letter-spacing:-0.067px;left:75px;top:119px;font-size:20px;font-weight:500;color:transparent;background:linear-gradient(to bottom,#d4d3ce 15%,#74736e 85%);-webkit-background-clip:text;background-clip:text;padding:2px 0">月次売上レポートを作成しました</span>
<span class="p sf" style="letter-spacing:-0.057px;left:43px;top:150.5px;">新しいシート <span class="tag" style="padding:4.5px 5px;vertical-align:0.5px;margin:0 1px;font-size:11px;letter-spacing:-0.25px">月次売上レポート</span> に、<span class="l">4</span>セクション構成のレポートを作成しました。</span>
<div class="hr" style="top:179px"></div>
<svg class="abs" style="left:48px;top:198px" width="12" height="15" viewBox="0 0 12 15"><path d="M0.5 0.5 H8 L11.5 4 V14.5 H0.5 Z" fill="#e4d9ee"/><path d="M8 0.5 V4 H11.5 Z" fill="#c9b8d8"/><path d="M2.5 6.5 H9.5 M2.5 8.7 H9.5 M2.5 10.9 H7.5" stroke="#a99bb8" stroke-width="0.9"/></svg>
<span class="p sf" style="letter-spacing:-0.503px;left:69px;top:207.3px;font-size:16px;font-weight:600;color:#1f1e1d">レポート構成</span>
<div id="tbl"></div>
<div class="tl" style="left:43px;width:843px;top:275px;height:1px"></div>
<div class="tl" style="left:43px;width:843px;top:318.5px;height:1px"></div>
<div class="tl" style="left:43px;width:843px;top:362px;height:1px"></div>
<div class="tl" style="left:43px;width:843px;top:405.5px;height:1px"></div>
<div class="tl" style="left:225px;top:235px;width:1px;height:214px"></div>
<div class="tl" style="left:659px;top:235px;width:1px;height:214px"></div>
<span class="p sf" style="letter-spacing:-0.347px;left:57px;top:256.3px;color:#3d3c38">セクション</span>
<span class="p sf" style="letter-spacing:0.000px;left:238.5px;top:256.3px;color:#3d3c38">内容</span>
<span class="p sf" style="left:672px;top:256.3px;color:#3d3c38">行</span>
<span class="p sf" style="letter-spacing:-0.127px;left:56.5px;top:297px;"><span class="cn">①</span> <b>全体サマリー</b></span>
<span class="p sf" style="letter-spacing:0.428px;left:238.5px;top:297px;">合計<span class="l">¥24,860</span>、<span class="l">20</span>件、<span class="l">1</span>件平均<span class="l">¥1,243</span> など<span class="l">6</span>つの<span class="l">KPI</span></span>
<span class="tag abs" style="left:672px;top:286px;height:21.5px;width:139px;padding:4.5px 0 0 5px;white-space:nowrap;font-size:11px;letter-spacing:-0.25px">月次売上レポート<span class="mono" style="font-size:11px;margin-left:10px;letter-spacing:0">A4:F8</span></span>
<span class="p sf" style="letter-spacing:-0.057px;left:56.5px;top:340px;"><span class="cn">②</span> <b>店舗別売上比較</b></span>
<span class="p sf" style="letter-spacing:-0.004px;left:238.5px;top:340px;"><span class="l">3</span>店舗のランキング表（売上・構成比・評価付き）</span>
<span class="tag abs" style="left:672px;top:329px;height:21.5px;width:152px;padding:4.5px 0 0 5px;white-space:nowrap;font-size:11px;letter-spacing:-0.25px">月次売上レポート<span class="mono" style="font-size:11px;margin-left:10px;letter-spacing:0">A10:F16</span></span>
<span class="p sf" style="letter-spacing:0.043px;left:56.5px;top:383.5px;"><span class="cn">③</span> <b>売れ筋トップ<span class="l">3</span></b></span>
<span class="p sf" style="letter-spacing:0.074px;left:238.5px;top:383.5px;">緑茶<span class="l">PB</span><span class="ar">→</span>おにぎり<span class="ar">→</span>コーヒー缶<span class="l">/</span>サンドイッチ</span>
<span class="tag abs" style="left:672px;top:372.5px;height:21.5px;width:152px;padding:4.5px 0 0 5px;white-space:nowrap;font-size:11px;letter-spacing:-0.25px">月次売上レポート<span class="mono" style="font-size:11px;margin-left:10px;letter-spacing:0">A18:F22</span></span>
<span class="p sf" style="letter-spacing:-0.002px;left:56.5px;top:427px;"><span class="cn">④</span> <b>改善の示唆</b></span>
<span class="p sf" style="letter-spacing:0.059px;left:238.5px;top:427px;"><span class="l">4</span>つの改善提案（課題と具体的アクション）</span>
<span class="tag abs" style="left:672px;top:416px;height:21.5px;width:152px;padding:4.5px 0 0 5px;white-space:nowrap;font-size:11px;letter-spacing:-0.25px">月次売上レポート<span class="mono" style="font-size:11px;margin-left:10px;letter-spacing:0">A24:C29</span></span>
<svg class="abs" style="left:48px;top:468px" width="13" height="17" viewBox="0 0 13 17"><path d="M6.5 0.8 C9.8 0.8 12 3.2 12 6 C12 8 10.8 9 9.8 10.4 C9.4 11 9.3 11.6 9.3 12.2 H3.7 C3.7 11.6 3.6 11 3.2 10.4 C2.2 9 1 8 1 6 C1 3.2 3.2 0.8 6.5 0.8 Z" fill="#f8cf5a"/><path d="M4.2 3.2 C5 2.4 6 2.1 7 2.2" stroke="#fdeeb0" stroke-width="1.2" fill="none" stroke-linecap="round"/><rect x="4" y="12.4" width="5" height="3.4" rx="1" fill="#9a8fb0"/></svg>
<span class="p sf" style="letter-spacing:-0.253px;left:67px;top:476.6px;font-size:16px;font-weight:600;color:#1f1e1d">改善提案のハイライト</span>
<span class="p sf" style="letter-spacing:0.075px;left:48.5px;top:505px;"><span class="l">1.</span> <b>渋谷店の客単価向上</b> — <span class="l">1</span>件平均<span class="l">¥1,029</span>と最低。セット販売の導入を提案</span>
<span class="p sf" style="letter-spacing:-0.044px;left:48.5px;top:529.7px;"><span class="l">2.</span> <b>日用品カテゴリの拡充</b> — 構成比<span class="l">18.9%</span>と低く、品揃え拡大の余地あり</span>
<span class="p sf" style="letter-spacing:-0.006px;left:48.5px;top:554.5px;"><span class="l">3.</span> <b>緑茶<span class="l">PB</span>の成功横展開</b> — 売上<span class="l">1</span>位商品のモデルを他飲料に展開</span>
<span class="p sf" style="letter-spacing:-0.033px;left:48.5px;top:579.5px;"><span class="l">4.</span> <b>池袋店のポテンシャル活用</b> — 高単価だが件数最少、集客強化を提案</span>
<div class="hr" style="top:607px"></div>
<span class="p sf" style="letter-spacing:0.057px;left:43px;top:634px;">内容の修正や、グラフの追加、<span class="l">Notion</span>への共有などがあればお知らせください！</span>
<svg class="abs" style="left:49px;top:657px" width="12" height="15" viewBox="0 0 12 15"><rect x="1" y="2.2" width="10" height="12" rx="1.5" stroke="#9b9a94" stroke-width="1" fill="none"/><rect x="3.6" y="0.8" width="4.8" height="2.8" rx="0.8" stroke="#9b9a94" stroke-width="1" fill="#faf9f5"/><path d="M3.2 8 H8.8 M3.2 10.6 H8.8" stroke="#9b9a94" stroke-width="0.9"/></svg>
<svg class="abs" style="left:74px;top:657px" width="14" height="14" viewBox="0 0 14 14"><path d="M4 6.2 L6.6 1.2 C7.8 1.2 8.2 2.2 8 3.2 L7.6 5.4 H11.2 C12.2 5.4 12.8 6.2 12.6 7.2 L11.8 11.2 C11.6 12.2 11 12.8 10 12.8 H4 Z M4 6.2 H1.4 V12.8 H4" stroke="#9b9a94" stroke-width="1" fill="none" stroke-linejoin="round"/></svg>
<svg class="abs" style="left:100px;top:659px" width="14" height="14" viewBox="0 0 14 14"><path d="M4 7.8 L6.6 12.8 C7.8 12.8 8.2 11.8 8 10.8 L7.6 8.6 H11.2 C12.2 8.6 12.8 7.8 12.6 6.8 L11.8 2.8 C11.6 1.8 11 1.2 10 1.2 H4 Z M4 7.8 H1.4 V1.2 H4" stroke="#9b9a94" stroke-width="1" fill="none" stroke-linejoin="round"/></svg>
<div class="abs" style="left:904.5px;top:647px;width:5px;height:37px;background:#8c8c8c;border-radius:3px"></div>
<svg class="abs" style="left:903px;top:689px" width="8" height="6" viewBox="0 0 8 6"><path d="M0.5 0.8 H7.5 L4 5.4 Z" fill="#9a9a9a"/></svg>
<svg class="abs" style="left:903px;top:107px" width="8" height="6" viewBox="0 0 8 6"><path d="M0.5 5.2 H7.5 L4 0.6 Z" fill="#e4e3de"/></svg>
<div class="abs" style="left:35px;top:697px;width:869px;height:170px;background:#f5f4ee;border:1px solid #dcdbd4;border-radius:18px"></div>
<span class="p ui" style="letter-spacing:-0.107px;left:52px;top:717.5px;font-size:12.5px;color:#2b2a28">E29 selected</span>
<svg class="abs" style="left:872px;top:713px" width="10" height="10" viewBox="0 0 10 10"><path d="M1 1 L9 9 M1 9 L9 1" stroke="#222" stroke-width="1.3"/></svg>
<div class="abs" style="left:35px;top:736px;width:869px;height:140px;background:#fff;border:1px solid #dddcd5;border-radius:18px"></div>
<span class="p ui squeeze" style="transform:translateY(-50%) scaleX(0.8842);transform-origin:left center;left:52px;top:762px;font-size:14px;color:#1f1e1d">このデータをもとに<span class="fw">、</span>上司向けの月次売上レポートの下書きを作成してください<span class="fw">。</span>以下の構成にしてください<span class="fw">：</span>①全体サマリー<span class="fw">（</span>合計金額・取引件数<span class="fw">）</span>②店舗</span>
<span class="p ui squeeze" style="transform:translateY(-50%) scaleX(0.9361);transform-origin:left center;left:52px;top:782px;font-size:14px;color:#1f1e1d">別の売上比較 ③売れ筋商品トップ3 ④改善の示唆</span>
<svg class="abs" style="left:55px;top:815.5px" width="13" height="13" viewBox="0 0 13 13"><path d="M6.5 0.5 V12.5 M0.5 6.5 H12.5" stroke="#55534e" stroke-width="1.2"/></svg>
<svg class="abs" style="left:89.5px;top:815px" width="14" height="15" viewBox="0 0 14 15"><path d="M3.6 8.4 V3.4 Q3.6 2.5 4.4 2.5 Q5.2 2.5 5.2 3.4 V2.2 Q5.2 1.3 6 1.3 Q6.9 1.3 6.9 2.2 V2.6 Q6.9 1.8 7.7 1.8 Q8.6 1.8 8.6 2.7 V3.6 Q8.6 2.9 9.4 2.9 Q10.3 2.9 10.3 3.8 V9.2 C10.3 12 8.8 13.6 6.6 13.6 C4.8 13.6 3.9 12.8 3 11.4 L1.3 8.6 Q0.9 7.8 1.6 7.4 Q2.3 7.1 2.9 7.8 Z" stroke="#55534e" stroke-width="1" fill="none" stroke-linejoin="round"/><path d="M5.2 3.4 V7 M6.9 2.6 V7 M8.6 3.6 V7" stroke="#55534e" stroke-width="1"/></svg>
<span class="p ui" style="letter-spacing:-0.596px;left:776px;top:822px;font-size:13px;color:#2b2a28">Opus 4.6</span>
<svg class="abs" style="left:829.5px;top:820px" width="9" height="6" viewBox="0 0 9 6"><path d="M0.8 0.8 L4.5 4.6 L8.2 0.8" stroke="#55534e" stroke-width="1" fill="none"/></svg>
<div class="abs" style="left:860.5px;top:806px;width:32px;height:32px;background:#c6613f;border-radius:8px"></div>
<svg class="abs" style="left:870.5px;top:815px" width="12" height="14" viewBox="0 0 12 14"><path d="M6 13 V1.5 M1.2 6.2 L6 1.4 L10.8 6.2" stroke="#fff" stroke-width="1.5" fill="none" stroke-linecap="round" stroke-linejoin="round"/></svg>
</div>
</body></html>
